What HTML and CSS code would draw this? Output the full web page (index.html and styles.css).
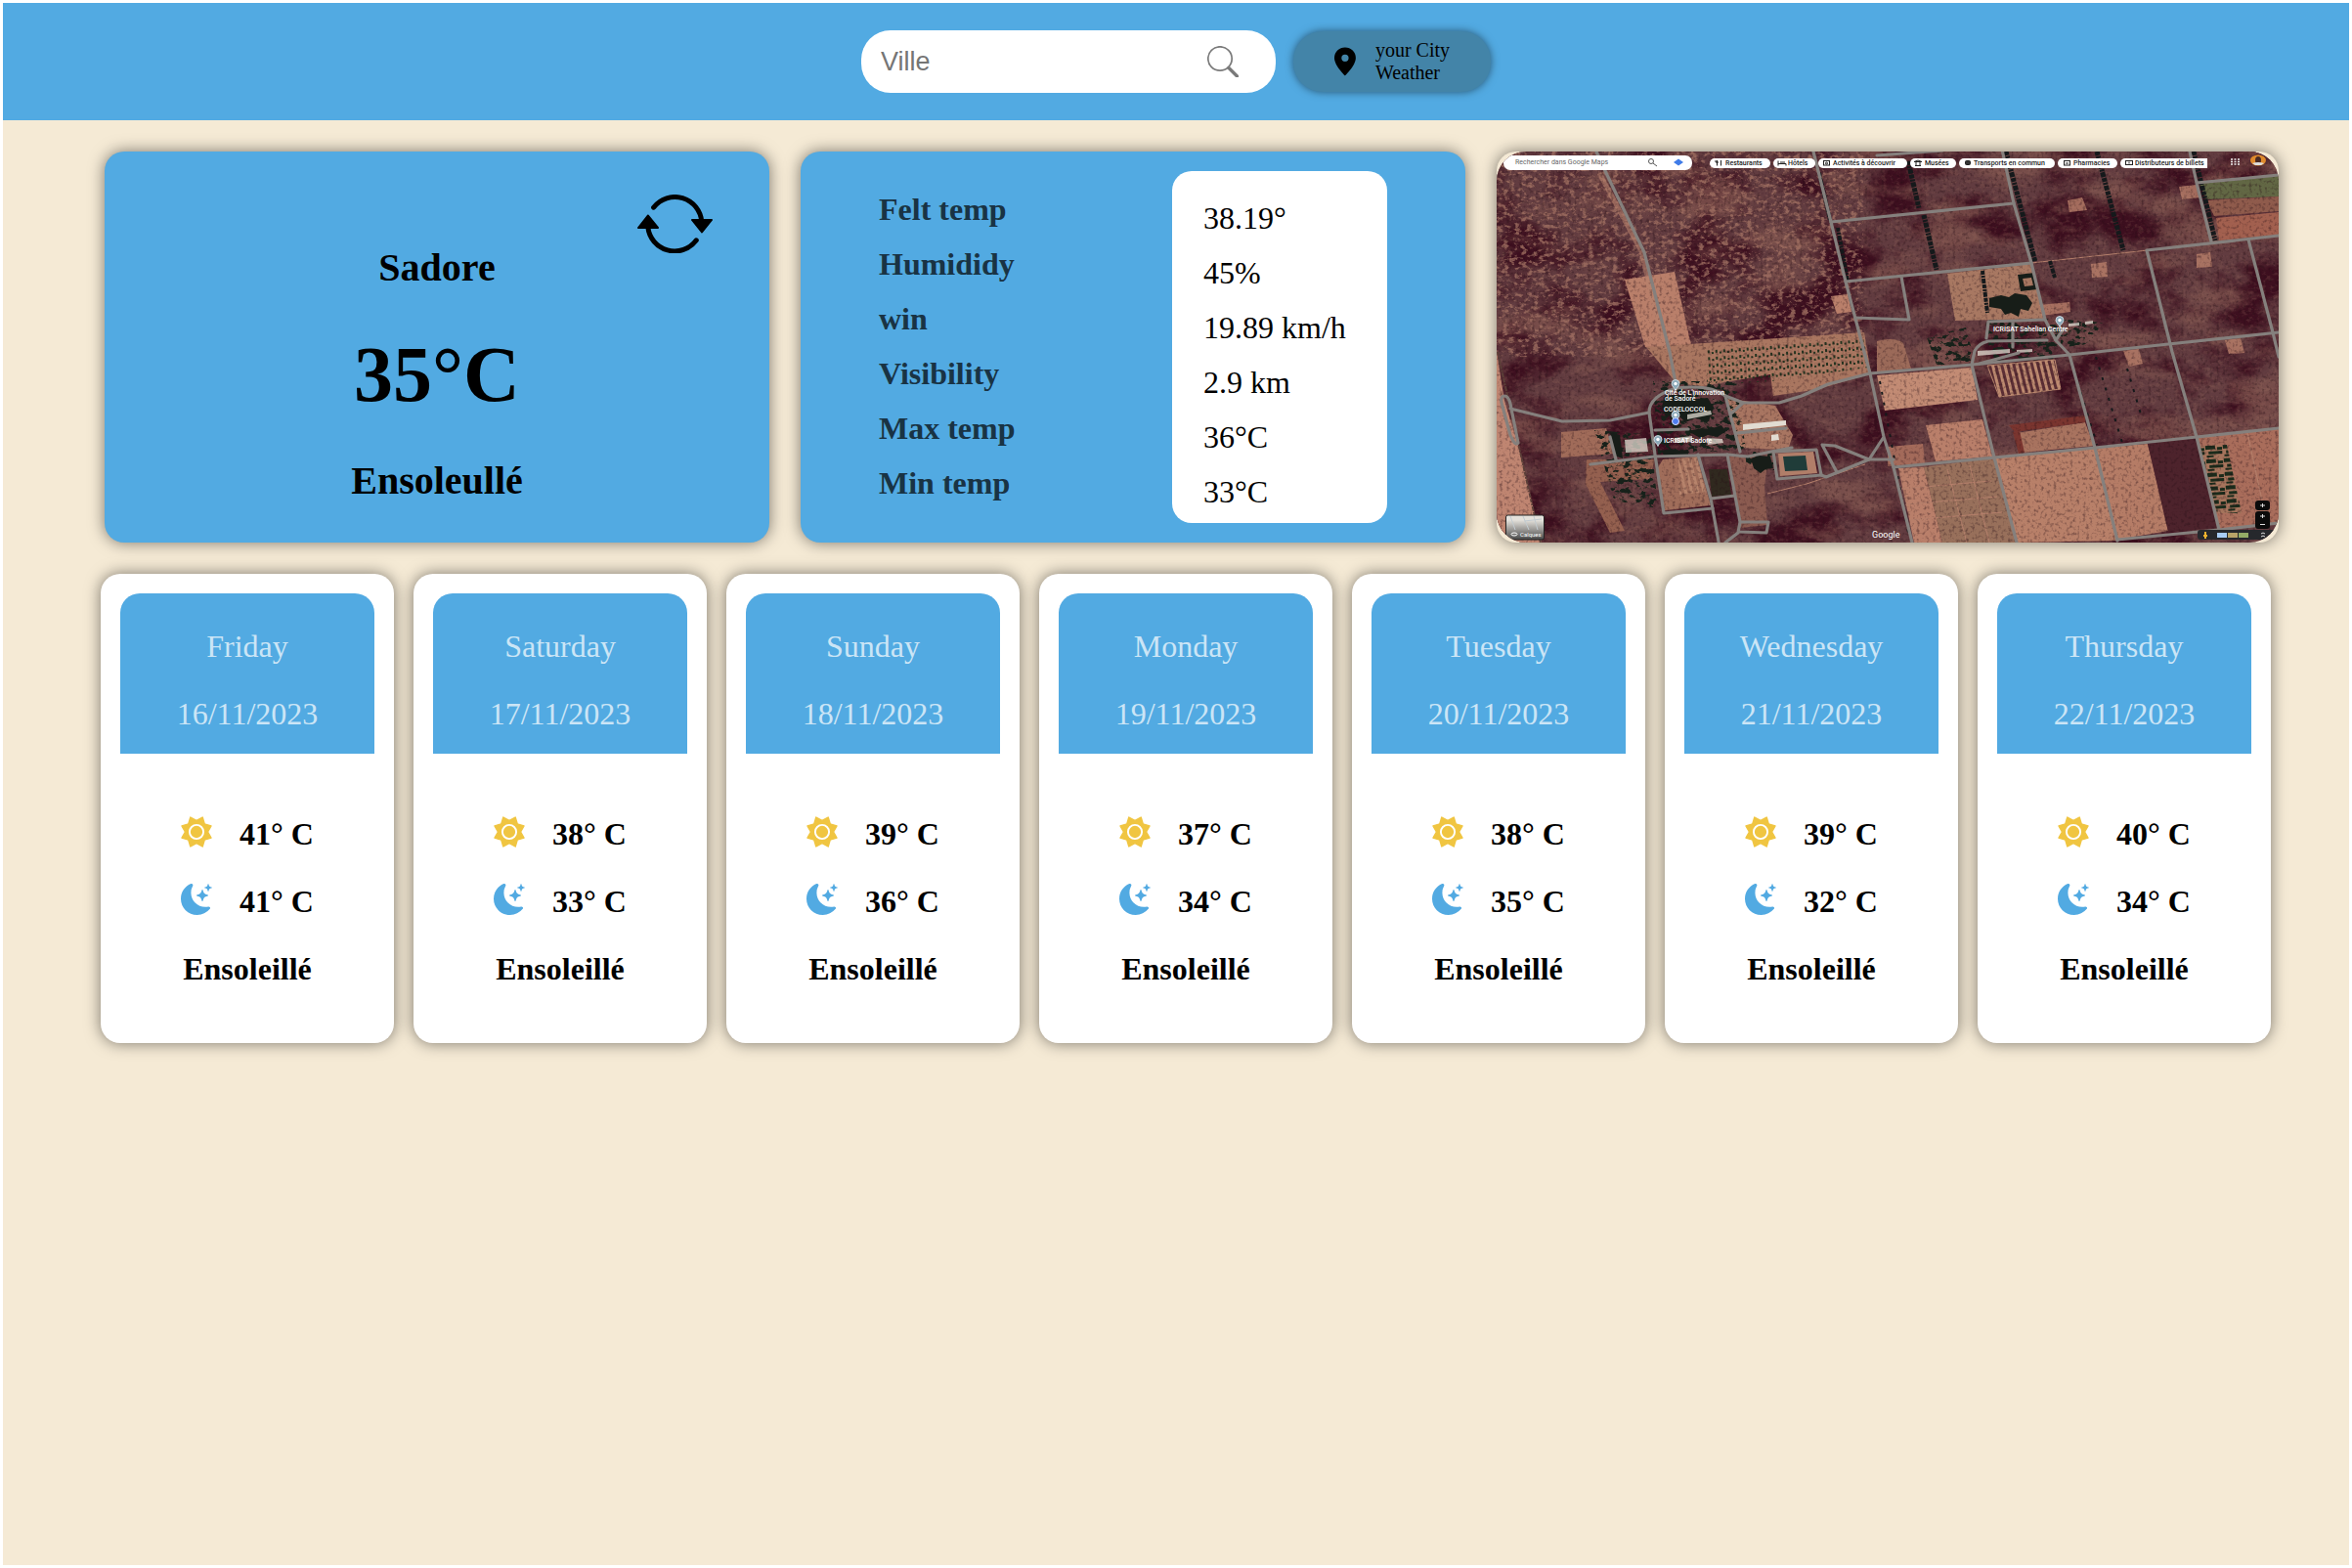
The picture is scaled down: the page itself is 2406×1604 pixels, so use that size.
FILE: index.html
```html
<!DOCTYPE html>
<html lang="fr">
<head>
<meta charset="utf-8">
<meta name="viewport" content="width=device-width, initial-scale=1">
<title>Weather - Sadore</title>
<link rel="stylesheet" href="styles.css">
</head>
<body>
<svg class="sprite" width="0" height="0" aria-hidden="true">
  <symbol id="sun" viewBox="0 0 32 32">
    <path fill="#f0c541" stroke="#f0c541" stroke-width="1.4" stroke-linejoin="round" d="M9.8 1L16 4.4 22.2 1 24.2 7.8 31 9.8 27.6 16 31 22.2 24.2 24.2 22.2 31 16 27.6 9.8 31 7.8 24.2 1 22.2 4.4 16 1 9.8 7.8 7.8z"/>
    <circle cx="16" cy="16" r="7.1" fill="none" stroke="#fff" stroke-width="1.9"/>
  </symbol>
  <symbol id="moon" viewBox="0 0 16 16">
    <path fill="#52aae2" d="M6 .278a.768.768 0 0 1 .08.858 7.208 7.208 0 0 0-.878 3.46c0 4.021 3.278 7.277 7.318 7.277.527 0 1.04-.055 1.533-.16a.787.787 0 0 1 .81.316.733.733 0 0 1-.031.893A8.349 8.349 0 0 1 8.344 16C3.734 16 0 12.286 0 7.71 0 4.266 2.114 1.312 5.124.06A.752.752 0 0 1 6 .278z"/>
    <path fill="#52aae2" d="M10.794 3.148a.217.217 0 0 1 .412 0l.387 1.162c.173.518.579.924 1.097 1.097l1.162.387a.217.217 0 0 1 0 .412l-1.162.387a1.734 1.734 0 0 0-1.097 1.097l-.387 1.162a.217.217 0 0 1-.412 0l-.387-1.162A1.734 1.734 0 0 0 9.31 6.593l-1.162-.387a.217.217 0 0 1 0-.412l1.162-.387a1.734 1.734 0 0 0 1.097-1.097l.387-1.162zM13.863.099a.145.145 0 0 1 .274 0l.258.774c.115.346.386.617.732.732l.774.258a.145.145 0 0 1 0 .274l-.774.258a1.156 1.156 0 0 0-.732.732l-.258.774a.145.145 0 0 1-.274 0l-.258-.774a1.156 1.156 0 0 0-.732-.732l-.774-.258a.145.145 0 0 1 0-.274l.774-.258c.346-.115.617-.386.732-.732L13.863.1z"/>
  </symbol>
  <symbol id="pin" viewBox="0 0 10 12">
    <path fill="#8ba9b8" stroke="#dfe9ee" stroke-width=".8" d="M5 11.5C4.500 9 1 7.500 1 4.500a4 4 0 0 1 8 0C9 7.500 5.500 9 5 11.500z"/>
    <circle cx="5" cy="4.500" r="1.700" fill="#fff"/>
  </symbol>
</svg>

<header class="topbar">
  <form class="search" role="search">
    <input class="search-input" type="text" placeholder="Ville" aria-label="Ville">
    <button class="icon-button" type="submit" aria-label="Search">
      <svg width="32" height="32" viewBox="0 0 32 32" fill="none" stroke="#7a7a7a">
        <circle cx="13" cy="13" r="12.200" stroke-width="1.700"/>
        <path d="M22 22.500L30.500 31" stroke-width="3.400" stroke-linecap="round"/>
      </svg>
    </button>
  </form>
  <button class="locate" type="button">
    <svg width="24" height="32" viewBox="2 0 12 16"><path fill-rule="evenodd" d="M8 16s6-5.686 6-10A6 6 0 0 0 2 6c0 4.314 6 10 6 10m0-8a2 2 0 1 1 0-4 2 2 0 0 1 0 4"/></svg>
    <span>your City<br>Weather</span>
  </button>
</header>

<main>
  <section class="overview">
    <article class="card current">
      <button class="icon-button refresh" type="button" aria-label="Refresh">
        <svg width="77" height="60" viewBox="0 0 77 60">
          <path d="M16.600 13.200A27.500 27.500 0 0 1 65.800 28M10.800 33A27.500 27.500 0 0 0 60.300 46.800" fill="none" stroke="#000" stroke-width="5" stroke-linecap="round"/>
          <path d="M56 26h20L66 38.500zM1 34h20L10.800 21.500z" stroke="#000" stroke-width="2" stroke-linejoin="round"/>
        </svg>
      </button>
      <div class="summary">
        <h1 class="place">Sadore</h1>
        <p class="temperature">35°C</p>
        <p class="place">Ensoleullé</p>
      </div>
    </article>

    <article class="card details">
      <ul class="labels">
        <li>Felt temp</li><li>Humididy</li><li>win</li><li>Visibility</li><li>Max temp</li><li>Min temp</li>
      </ul>
      <ul class="values">
        <li>38.19°</li><li>45%</li><li>19.89 km/h</li><li>2.9 km</li><li>36°C</li><li>33°C</li>
      </ul>
    </article>

    <figure class="map">
      <svg class="map-view" viewBox="0 0 800 400" preserveAspectRatio="xMidYMid slice" role="img" aria-label="Satellite map of Sadore">
        <defs>
          <filter id="speckle" x="0" y="0" width="100%" height="100%" color-interpolation-filters="sRGB">
            <feTurbulence type="fractalNoise" baseFrequency="0.16 0.24" numOctaves="4" seed="4"/>
            <feColorMatrix values="0 0 0 0 .62  0 0 0 0 .43  0 0 0 0 .38  5 0 0 0 -2.500"/>
          </filter>
          <filter id="patches" x="0" y="0" width="100%" height="100%" color-interpolation-filters="sRGB">
            <feTurbulence type="fractalNoise" baseFrequency="0.016 0.022" numOctaves="5" seed="9"/>
            <feColorMatrix values="0 0 0 0 .24  0 0 0 0 .06  0 0 0 0 .12  0 4 0 0 -1.700"/>
          </filter>
          <filter id="warm" x="0" y="0" width="100%" height="100%" color-interpolation-filters="sRGB">
            <feTurbulence type="fractalNoise" baseFrequency="0.012 0.03" numOctaves="5" seed="21"/>
            <feColorMatrix values="0 0 0 0 .52  0 0 0 0 .35  0 0 0 0 .32  0 0 4 0 -2"/>
          </filter>
          <filter id="shrubs" x="0" y="0" width="100%" height="100%" color-interpolation-filters="sRGB">
            <feTurbulence type="fractalNoise" baseFrequency="0.130 0.200" numOctaves="3" seed="12" result="n"/>
            <feColorMatrix in="n" values="0 0 0 0 .09  0 0 0 0 .13  0 0 0 0 .1  0 9 0 0 -4.600" result="c"/>
            <feComposite in="c" in2="SourceAlpha" operator="in"/>
          </filter>
          <filter id="grain" x="0" y="0" width="100%" height="100%" color-interpolation-filters="sRGB">
            <feTurbulence type="fractalNoise" baseFrequency="0.3" numOctaves="2" seed="30"/>
            <feColorMatrix values="0 0 0 0 .14  0 0 0 0 .05  0 0 0 0 .08  0 3 0 0 -1.500"/>
          </filter>
          <pattern id="orchard" width="8" height="7" patternUnits="userSpaceOnUse" patternTransform="rotate(-4)">
            <path d="M1 1h2v3h-2zM5 3h2v2h-2z" fill="#23331f"/>
          </pattern>
          <pattern id="rows" width="6" height="60" patternUnits="userSpaceOnUse" patternTransform="rotate(-14)">
            <path d="M0 0h3v60h-3z" fill="#bd8a70"/>
          </pattern>
          <pattern id="crop" width="18" height="14" patternUnits="userSpaceOnUse" patternTransform="rotate(-4)">
            <path d="M0 1h10v4h-10zM12 3h5v3h-5zM3 7h14v3h-14zM1 11h7v2h-7z" fill="#1b2b1b"/>
          </pattern>
          <linearGradient id="fade" x1="0" y1="0" x2="0" y2="1"><stop offset="0.200" stop-color="#e4e1db"/><stop offset="1" stop-color="#4a4a4a"/></linearGradient>
        </defs>

        <rect width="800" height="400" fill="#623c40"/>
        <path filter="url(#patches)" d="M0 0h800v400H0z"/>
        <path filter="url(#warm)" opacity=".7" d="M0 0h800v400H0z"/>
        <path filter="url(#speckle)" opacity=".8" d="M0 0h325l50 190-190 20-185 0z"/>
        <path filter="url(#speckle)" opacity=".2" d="M320 0h480v400H0V200z"/>

        <!-- bare fields -->
        <g fill="#b97f6a">
          <path d="M131 131l51-8 17 75-47 2z"/>
          <path d="M0 205l8 50 14 45 24 100H0z" fill="#bf8571"/>
          <path d="M153 200l223-15 7 42-53 16-47 7-3-22-70 12-26-3z" fill="#a97660"/>
          <path d="M389 229l97-8 6 33-95 11z" fill="#c28b74"/>
          <path d="M439 280l58-6 10 38-58 5z"/>
          <path d="M509 313l103-10 23 95-103 2z" fill="#b88069"/>
          <path d="M612 303l54-4 21 89-52 9z" fill="#b57c66"/>
          <path d="M411 324l26-1 19 77h-29z"/>
          <path d="M437 323l72-10 23 87h-76z" fill="#98705b"/>
          <path d="M716 292l84-9v97l-61 7z" fill="#a96d5b"/>
          <path d="M532 288l70-11 9 24-74 7z" fill="#a8735f"/>
          <path d="M736 68l64-6v23l-61 6z" fill="#a2604f"/>
          <path d="M719 33l81-8v21l-74 3z" fill="#626744"/>
          <path d="M726 50l74-4v15l-66 5z" fill="#8f5b4c"/>
          <path d="M461 125l86-10 12 56-90 2z" fill="#a87862"/>
          <path d="M389 194q18-5 27 2l8 26-35 4z" fill="#9b6a59"/>
          <path d="M400 322l38-3-2-20-36 3z" fill="#a36a5a"/>
          <path d="M584 50l15-3 5 13-18 2zM608 115l16-2 1 15-16 1zM698 36l18-2 4 13-19 2zM716 105l14-2 2 15-16 1zM745 193l16-2 4 15-16 1zM641 204l16-2 4 15-14 3zM555 157l31-3 1 10-30 4z" opacity=".8"/>
          <path d="M342 148l17-2 4 18-15 2z"/>
          <path d="M66 287l46-4 8 26-54 4z" fill="#a06b59"/>
          <path d="M170 315l35-3 14 50-47 5-8-42z" fill="#a06d5a"/>
          <path d="M238 312l40 0-4 30 3 40-28 3z" fill="#8b5b50"/>
          <path d="M92 315l70 0-6 20-50 3 25 50-15 2-25-50z" fill="#94604f"/>
          <path d="M235 252l50 8 18 30-5 15-50-2z" fill="#a87561"/>
        </g>
        <path d="M528 287l7-1 5 22-6 1zM524 280l78-10v7l-72 10z" fill="#7a352f"/>
        <path d="M666 299l50-7 23 93-52 4z" fill="#4d232c"/>
        <path d="M502 219l69-6 6 30-63 8z" fill="#5c2f35"/>
        <path d="M502 219l69-6 6 30-63 8z" fill="url(#rows)" stroke="#bd8a70"/>
        <path d="M215 203l160-14 5 32-100 14-65 4z" fill="url(#orchard)"/>
        <path d="M719 301l28-1 15 70h-25z" fill="#a5745c"/>
        <path d="M719 301l28-1 15 70h-25z" fill="url(#crop)"/>
        <path d="M186 315l20-2 11 35-30 3z" fill="url(#rows)" opacity=".8"/>
        <path d="M217 325h19l4 26-20 2z" fill="#30291f"/>
        <g fill="none" stroke="#b5806c" stroke-width="1"><path d="M547 114l119-13M612 303l104-11M461 325l20 75M484 321l20 79M414 345l92-8M418 361l94-8M423 377l94-8M768 288l20 92M277 350l40-10 60-20"/><path d="M105 22l43 80 24 100" stroke-width="5" opacity=".6"/></g>
        <path filter="url(#grain)" opacity=".4" d="M0 0h800v400H0z"/>

        <!-- shrubs and lines of trees -->
        <g filter="url(#shrubs)"><path d="M160 235l85 0 10 70-90 5zM100 285l62 5-2 25 5 50-45-8zM500 172l60 5 10 35-65 5zM560 170l60 5-15 22-40 5zM440 190l40-10 10 38-40 0zM255 307l30 0 0 20-30-5z"/></g>
        <g fill="#171d18">
          <path d="M172 250l24-2 8 5 12-1 6 10-5 14-14-3-10 4-8-8-12 2-4-10zM196 286l14-3 8 1 12-4 4 6-8 6-10-2-8 3zM116 287l10 3 3 24-9-3zM260 314l8-3 12 1 3 12-8 1-5 4-7-5zM168 306l10-2 6 2 12-1 0 6-10 2-14-1z"/>
          <path fill-rule="evenodd" d="M533 126l17-2 3 17-17 2zM538 130l9-1 2 8-9 1z"/>
          <path d="M504 150l12-3 8 2 6-4 12 2 6 8-4 8-8-2-2 8-8-4-6 2-4-6-12-2z"/>
        </g>
        <g fill="none" stroke="#15191b" stroke-dasharray="4 1 2 1 5 1">
          <path d="M421 10l11 48M437 65l13 56M614 0l27 101" stroke-width="5"/>
          <path d="M521 0l30 113M713 0l22 91" stroke-width="5"/>
          <path d="M330 22l11 48M349 78l10 55M497 122l5 43M566 112l5 17" stroke-width="4"/>
          <path d="M392 235l30 160M588 215l26 85M613 210l27 88M645 222l15 50" stroke-width="2" stroke-dasharray="3 8"/>
          <path d="M1 205l44 195" stroke="#5b3f38" stroke-width="2"/>
        </g>

        <!-- buildings -->
        <g fill="#e2dcd2"><path d="M252 279l44-4v5l-44 5zM281 290l7-1 1 6-8 1z"/><path d="M131 295l22-2 2 14-23 1zM195 269l24-4 1 4-25 5zM182 293l18-2 0 6-18 1zM215 293l16 1 1 4-16 2zM492 204l33-2v4l-33 3zM532 203l16-1v3l-16 1zM585 176l11-1v3l-11 1zM602 174l8-1v3l-8 1z" opacity=".75"/></g>

        <!-- reservoir -->
        <path d="M288 309l36-2 4 22-38 3z" fill="#b17e69"/><path d="M293 312l23-1 2 15-23 1z" fill="#203c39"/>

        <!-- roads -->
        <g fill="none" stroke="#85807d" stroke-width="3.200" stroke-linejoin="round" stroke-linecap="round">
          <path d="M102 0l10 22 39 81 26 102 7 37"/>
          <path d="M184 242q-28 8-28 25l6 43 9 60 50-5M184 242q35-4 50 8l18 7h37l23-7 27-12 43-11 104-9 100-10 101-11 113-12"/>
          <path d="M324 0l18 72 15 61 19 72 6 22 14 65 10 31 19 77M396 292l-15 23-44 18-5-2"/>
          <path d="M342 72l187-19M357 133l190-19M389 4l67-5"/>
          <path d="M517-2l12 55 18 61 14 58 11 21 14 15 26 95 23 95"/>
          <path d="M709 0l7 32 15 60M716 32l84-8M800 86l-135 15 26 104 25 87 23 95M769 90l25 95 6 25"/>
          <path d="M486 218l23 95 23 87M406 323l103-10 103-10 104-11 84-9M635 397l104-10 61-7"/>
          <path d="M414 128l8 44-55-2"/>
          <path d="M14 263l53 13 49-1 40-8M8 250q4 0 6 8l8 40q-3 4-8-8l-9-33q-1-7 3-7z"/>
          <path d="M96 320l65-8 75-2 21 2 24-5 21-4M116 292l6 23M234 250l15 57M252 257l-11 10M162 285l34-1M246 288l50-5"/>
          <path d="M206 310l13 45 8 44M236 310l13 69-2 11-13 10M219 355l25-3M249 379h29l-2 11-27-1"/>
          <path d="M283 307l44-2 5 26-45 4zM348 328l-15-28 13 1 35 14 25 0"/>
          <path d="M486 218l3-14q4-8 14-10l60-1M501 191l2-17 58-2M528 174v26M494 217l40-11M572 193l8-12"/>
        </g>

        <!-- place labels -->
        <use href="#pin" x="178" y="233" width="10" height="12"/>
        <use href="#pin" x="178" y="265" width="10" height="12"/>
        <use href="#pin" x="160" y="290" width="10" height="12"/>
        <use href="#pin" x="571" y="168" width="10" height="12"/>
        <circle cx="183" cy="276" r="3.500" fill="#4f7df0" stroke="#d9e4ff"/>
        <g class="map-place">
          <text x="172" y="249">Cité de L'innovation</text>
          <text x="172" y="255">de Sadoré</text>
          <text x="171" y="266">CODELOCCOL</text>
          <text x="171" y="298">ICRISAT Sadore</text>
          <text x="508" y="184">ICRISAT Sahelian Centre</text>
        </g>
        <text class="map-brand" x="384" y="395">Google</text>

        <!-- map toolbar -->
        <rect x="7" y="4" width="193" height="15" rx="7" fill="#fff"/>
        <text class="map-hint" x="19" y="13">Rechercher dans Google Maps</text>
        <g fill="none" stroke="#555"><circle cx="158" cy="10" r="2.500"/><path d="M160 12l4 3"/></g>
        <path d="M186 7.500l5 3.500-5 3.500-5-3.500z" fill="#3f7be8"/>
        <g fill="#fff"><rect x="218" y="7" width="62" height="10" rx="5"/><rect x="283" y="7" width="43" height="10" rx="5"/><rect x="329" y="7" width="91" height="10" rx="5"/><rect x="423" y="7" width="47" height="10" rx="5"/><rect x="473" y="7" width="98" height="10" rx="5"/><rect x="574" y="7" width="61" height="10" rx="5"/><path d="M643 7h84v10h-84a5 5 0 0 1 0-10z"/></g>
        <g fill="none" stroke="#222"><path d="M225.500 9v5.500M229.500 9v5.500M224 9v2h3M288 9.500v5M288 12.500h8v2M290 11h5"/><rect x="334.500" y="9.500" width="6" height="4.500"/><circle cx="337.500" cy="12" r="1"/><path d="M427 10.500l4-1.500 4 1.500zM428 14.500h6M429 11v3M433 11v3"/><rect x="479.500" y="9.500" width="5" height="4" rx="1" fill="#333"/><rect x="580.500" y="9.500" width="6" height="4.500"/><path d="M582 12h3"/><rect x="643.500" y="9.500" width="7" height="4"/><path d="M647 10.500v2"/></g>
        <g class="map-chip">
          <text x="234" y="14">Restaurants</text><text x="298" y="14">Hôtels</text><text x="344" y="14">Activités à découvrir</text><text x="438" y="14">Musées</text><text x="488" y="14">Transports en commun</text><text x="590" y="14">Pharmacies</text><text x="653" y="14">Distributeurs de billets</text>
        </g>
        <path d="M751 8h9M751 10.500h9M751 13h9" stroke="#eee" stroke-width="1.500" stroke-dasharray="2 1.500"/>
        <ellipse cx="779" cy="9" rx="8" ry="5.500" fill="#e08a2c"/><ellipse cx="779" cy="9" rx="3" ry="4" fill="#4a2a22"/><path d="M773 12q6-2 12 0l-3 2h-6z" fill="#ddd"/>

        <!-- layers and zoom controls -->
        <rect x="9.500" y="372" width="39" height="25" rx="2" fill="url(#fade)" stroke="#222"/>
        <path d="M14 373l5 14M27 373l6 14M28 378l18-2M38 373l4 14" stroke="#c2cbd0" fill="none"/>
        <ellipse cx="18" cy="391.500" rx="3" ry="1.500" fill="none" stroke="#fff"/>
        <text class="map-layer" x="24" y="394">Calques</text>
        <g fill="#0b0b0b"><rect x="776" y="357" width="15" height="10" rx="3"/><rect x="776" y="368" width="15" height="18" rx="3"/></g>
        <path d="M720 387h80v10h-80a3 3 0 0 1-3-3v-4a3 3 0 0 1 3-3z" fill="#26282c"/>
        <path d="M781 373h5M783.500 371v4M781 381.500h5M781 362h5M783.500 360v4M782 391l2-1 2 1M782 394l2-1 2 1" stroke="#ddd" fill="none"/>
        <path d="M724 389h2v3h1v2h-1v2h-2v-2h-1v-2h1z" fill="#eeb12e"/>
        <path d="M737 390h10v5h-10z" fill="#a9cdf5"/><path d="M748 390h10v5h-10z" fill="#b9a468"/><path d="M759 390h10v5h-10z" fill="#93ac66"/>
      </svg>
    </figure>
  </section>

  <section class="week">
    <article class="day"><header class="day-head"><p>Friday</p><p>16/11/2023</p></header><div class="day-body"><p class="reading"><svg><use href="#sun"/></svg>41° C</p><p class="reading"><svg><use href="#moon"/></svg>41° C</p><p>Ensoleillé</p></div></article>
    <article class="day"><header class="day-head"><p>Saturday</p><p>17/11/2023</p></header><div class="day-body"><p class="reading"><svg><use href="#sun"/></svg>38° C</p><p class="reading"><svg><use href="#moon"/></svg>33° C</p><p>Ensoleillé</p></div></article>
    <article class="day"><header class="day-head"><p>Sunday</p><p>18/11/2023</p></header><div class="day-body"><p class="reading"><svg><use href="#sun"/></svg>39° C</p><p class="reading"><svg><use href="#moon"/></svg>36° C</p><p>Ensoleillé</p></div></article>
    <article class="day"><header class="day-head"><p>Monday</p><p>19/11/2023</p></header><div class="day-body"><p class="reading"><svg><use href="#sun"/></svg>37° C</p><p class="reading"><svg><use href="#moon"/></svg>34° C</p><p>Ensoleillé</p></div></article>
    <article class="day"><header class="day-head"><p>Tuesday</p><p>20/11/2023</p></header><div class="day-body"><p class="reading"><svg><use href="#sun"/></svg>38° C</p><p class="reading"><svg><use href="#moon"/></svg>35° C</p><p>Ensoleillé</p></div></article>
    <article class="day"><header class="day-head"><p>Wednesday</p><p>21/11/2023</p></header><div class="day-body"><p class="reading"><svg><use href="#sun"/></svg>39° C</p><p class="reading"><svg><use href="#moon"/></svg>32° C</p><p>Ensoleillé</p></div></article>
    <article class="day"><header class="day-head"><p>Thursday</p><p>22/11/2023</p></header><div class="day-body"><p class="reading"><svg><use href="#sun"/></svg>40° C</p><p class="reading"><svg><use href="#moon"/></svg>34° C</p><p>Ensoleillé</p></div></article>
  </section>
</main>
</body>
</html>
```
FILE: styles.css
```css
:root {
  --blue: #52aae2;
  --sand: #f5ead5;
  --shadow: 0 0 16px rgba(0, 0, 0, 0.5);
}

* { box-sizing: border-box; }

html { background: #fff; }

body {
  margin: 0;
  min-height: 100vh;
  border: 3px solid #fff;
  background: var(--sand);
  background-clip: padding-box;
  font-family: "Liberation Serif", "Times New Roman", serif;
  font-size: 32px;
  line-height: 37px;
  color: #000;
}

h1, p, ul, figure { margin: 0; padding: 0; }
ul { list-style: none; }

.sprite { position: absolute; }

.icon-button {
  display: flex;
  padding: 0;
  border: 0;
  background: none;
  cursor: pointer;
}

/* top bar */
.topbar {
  display: flex;
  justify-content: center;
  align-items: center;
  gap: 18px;
  height: 120px;
  background: var(--blue);
}

.search {
  display: flex;
  align-items: center;
  width: 424px;
  height: 64px;
  padding: 0 38px 0 20px;
  border-radius: 30px;
  background: #fff;
}

.search-input {
  flex: 1;
  min-width: 0;
  padding: 0;
  border: 0;
  outline: 0;
  background: none;
  font: 27px "Liberation Sans", Arial, sans-serif;
}

.search-input::placeholder { color: #757575; }

.locate {
  display: flex;
  align-items: center;
  gap: 20px;
  width: 202px;
  height: 62px;
  padding: 0 42px;
  border: 0;
  border-radius: 30px;
  background: #4384a8;
  box-shadow: 0 0 8px rgba(0, 0, 0, 0.5);
  font: 20px/23px "Liberation Serif", "Times New Roman", serif;
  color: #000;
  text-align: left;
  white-space: nowrap;
}

/* current weather, details and map */
.overview {
  display: grid;
  grid-template-columns: 680fr 680fr 800fr;
  gap: 32px;
  padding: 32px 72px 32px 104px;
}

.card {
  min-height: 400px;
  border-radius: 20px;
  background: var(--blue);
  box-shadow: var(--shadow);
}

.current { display: grid; }

.refresh {
  grid-area: 1 / 1;
  place-self: start end;
  margin: 44px 58px 0 0;
}

.summary {
  grid-area: 1 / 1;
  place-self: end center;
  display: flex;
  flex-direction: column;
  align-items: center;
  gap: 40px;
  padding-bottom: 40px;
  font-weight: bold;
}

.place { font-size: 40px; line-height: 46px; }
.temperature { font-size: 80px; line-height: 92px; }

.details {
  display: flex;
  justify-content: space-between;
  padding: 20px 80px;
  line-height: 56px;
}

.labels {
  padding-top: 11px;
  font-weight: bold;
  color: #193344;
}

.values {
  width: 220px;
  padding: 20px 0 0 32px;
  border-radius: 20px;
  background: #fff;
  white-space: nowrap;
}

.map {
  height: 400px;
  border-radius: 20px;
  background: var(--sand);
  box-shadow: var(--shadow);
}

.map-view {
  display: block;
  width: 100%;
  height: 100%;
  border-radius: 30px;
}

.map-view text { font-family: Roboto, sans-serif; }
.map-hint { font-size: 7px; fill: #666; }
.map-chip { font-size: 7px; font-weight: 500; fill: #222; }
.map-place { font-size: 7px; font-weight: 500; fill: #fff; }
.map-layer { font-size: 6px; fill: #fff; }
.map-brand { font-size: 9px; fill: #fff; }

/* seven-day forecast */
.week {
  display: grid;
  grid-template-columns: repeat(7, 1fr);
  gap: 20px;
  padding: 0 80px 32px 100px;
}

.day {
  min-height: 480px;
  padding: 20px;
  border-radius: 20px;
  background: #fff;
  box-shadow: var(--shadow);
  text-align: center;
}

.day-head {
  display: grid;
  gap: 32px;
  padding: 36px 0 22px;
  border-radius: 20px 20px 0 0;
  background: var(--blue);
  color: #cbe5f6;
}

.day-body {
  display: grid;
  gap: 32px;
  padding-top: 64px;
  font-weight: bold;
}

.reading {
  display: flex;
  justify-content: center;
  gap: 28px;
}

.reading svg { width: 32px; height: 32px; }
```
